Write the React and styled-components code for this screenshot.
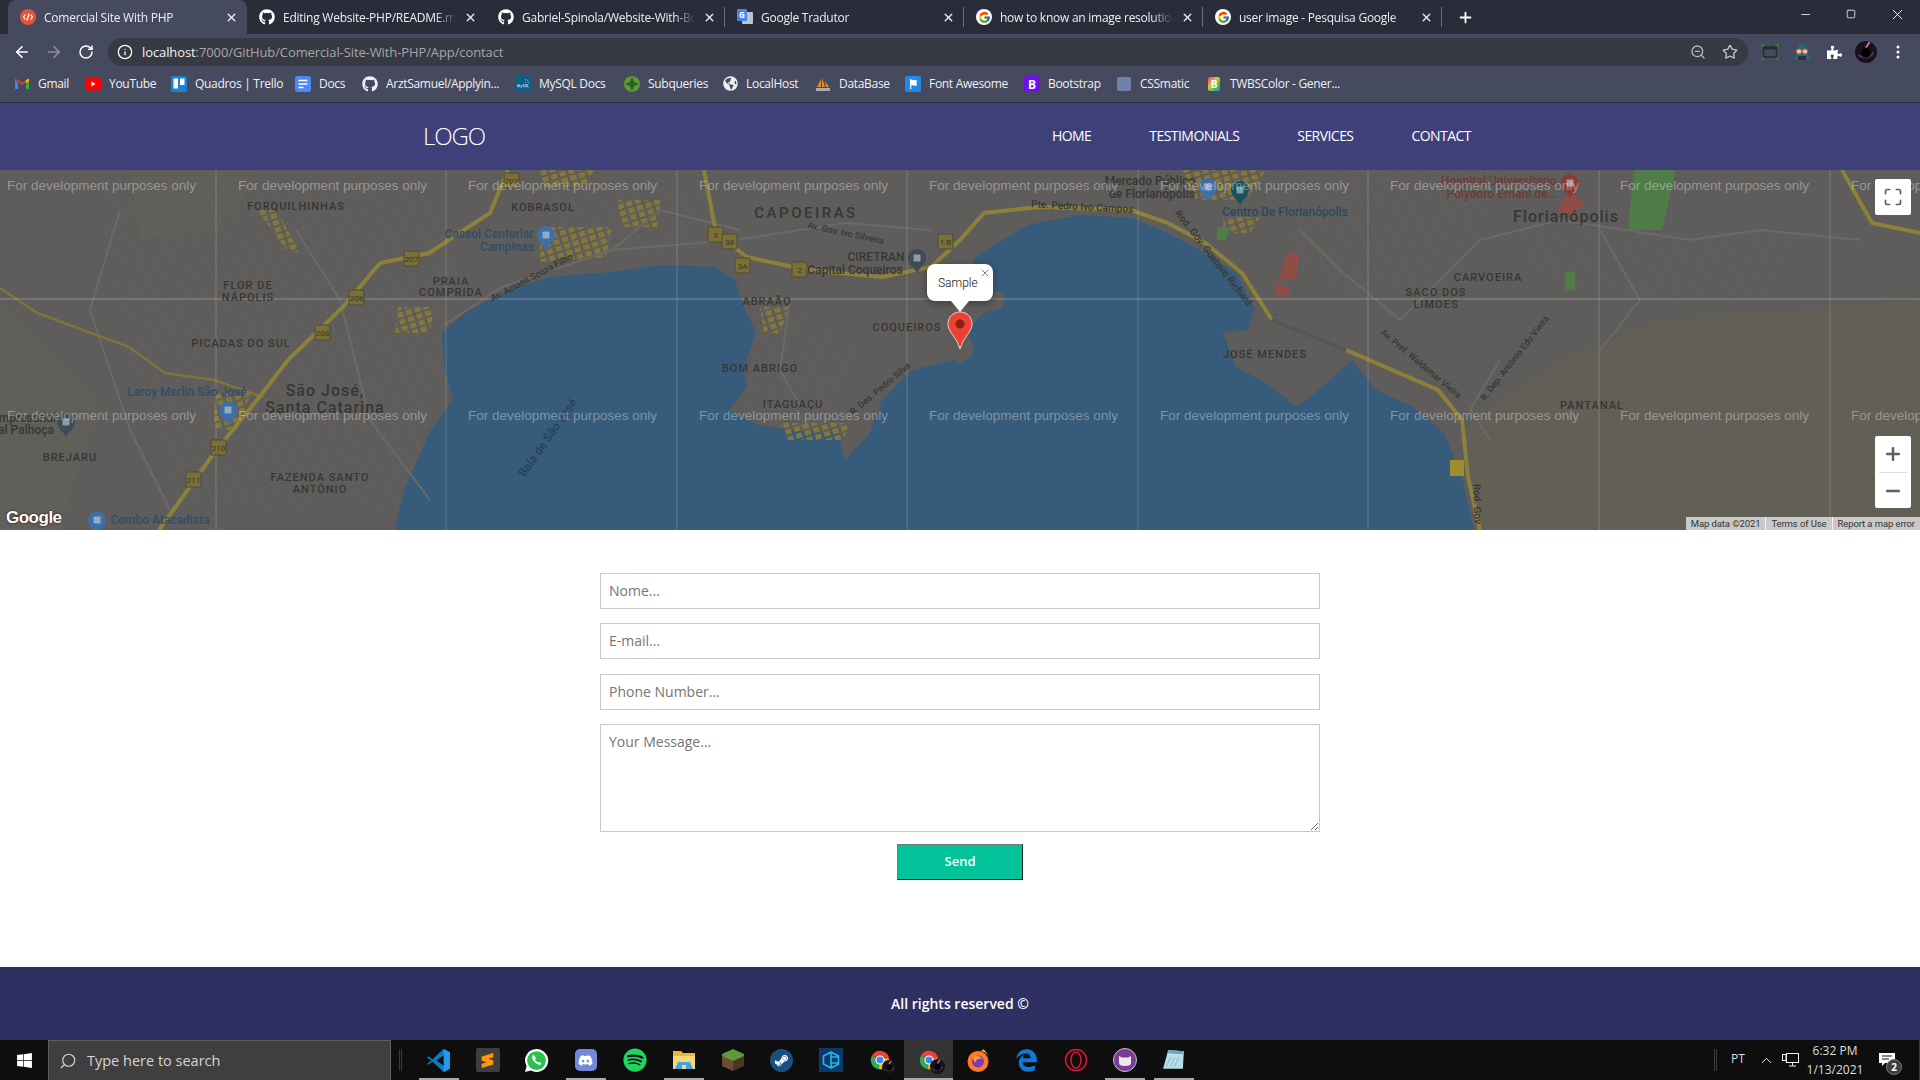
import React from 'react'
import styled, { createGlobalStyle } from 'styled-components'
import { ArrowLeft, ArrowRight, RotateCw, Info, ZoomOut, Star, Search, ChevronUp, X, Plus, Minus, Square, Maximize } from 'lucide-react'
import { FaGithub, FaWindows, FaDiscord, FaSpotify, FaSteamSymbol, FaEdgeLegacy, FaPuzzlePiece, FaGlobeAmericas } from 'react-icons/fa'
import { FcGoogle } from 'react-icons/fc'
import { SiSublimetext, SiMysql } from 'react-icons/si'

const GlobalStyle = createGlobalStyle`
    html, body {
        margin: 0;
        padding: 0;
        background: #fff;
    }
    * {
        box-sizing: border-box;
    }
    body {
        font-family: "Open Sans", "Liberation Sans", sans-serif;
    }
`

const Screen = styled.div`
    width: 1920px;
    height: 1080px;
    display: flex;
    flex-direction: column;
    overflow: hidden;
`

/* browser chrome */
const TabStrip = styled.div`
    height: 34px;
    display: flex;
    padding-left: 8px;
    background: #2a2c39;
    color: #fff;
`

const Tab = styled.div`
    position: relative;
    width: 239px;
    height: 34px;
    display: flex;
    align-items: center;
    padding: 0 9px 0 12px;
    gap: 8px;
    border-radius: 8px 8px 0 0;
    background: ${p => (p.$active ? '#454a5e' : 'transparent')};
    &::after {
        content: '';
        position: absolute;
        right: 0;
        top: 7px;
        height: 20px;
        width: 1px;
        background: ${p => (p.$active || p.$plain ? 'transparent' : '#6b6e7c')};
    }
`

const TabTitle = styled.span`
    flex: 1;
    min-width: 0;
    font-size: 12px;
    letter-spacing: -0.25px;
    white-space: nowrap;
    overflow: hidden;
    color: #eceef3;
    -webkit-mask-image: linear-gradient(to right, #000 88%, transparent);
    mask-image: linear-gradient(to right, #000 88%, transparent);
`

const GoogleBadge = styled.span`
    width: 16px;
    height: 16px;
    display: flex;
    flex: none;
    align-items: center;
    justify-content: center;
    border-radius: 50%;
    background: #fff;
`

const PlusSlot = styled.div`
    width: 46px;
    display: flex;
    align-items: center;
    justify-content: center;
`

const WindowControls = styled.div`
    margin-left: auto;
    display: flex;
`

const WindowButton = styled.div`
    width: 46px;
    height: 28px;
    display: flex;
    align-items: center;
    justify-content: center;
`

const Toolbar = styled.div`
    height: 36px;
    display: flex;
    align-items: center;
    padding-left: 6px;
    background: #454a5e;
`

const ToolButton = styled.div`
    width: 32px;
    height: 28px;
    flex: none;
    display: flex;
    align-items: center;
    justify-content: center;
    color: ${p => p.$color || '#fff'};
`

const Omnibox = styled.div`
    width: 1640px;
    height: 28px;
    margin: 0 6px;
    padding: 0 2px 0 9px;
    display: flex;
    align-items: center;
    border-radius: 14px;
    background: #373943;
    color: #fff;
`

const Url = styled.span`
    flex: 1;
    margin-left: 9px;
    font-size: 13px;
    letter-spacing: -0.1px;
    color: #a5a7ad;
    & b {
        font-weight: 400;
        color: #f1f1f3;
    }
`

const BookmarkBar = styled.div`
    height: 33px;
    display: flex;
    padding: 0 0 5px 14px;
    background: #454a5e;
    border-bottom: 1px solid #2a2c39;
`

const Bookmark = styled.div`
    width: ${p => p.$w}px;
    display: flex;
    align-items: center;
    gap: 8px;
    font-size: 12px;
    letter-spacing: -0.3px;
    white-space: nowrap;
    color: #f0f1f4;
`

const MysqlTile = styled.span`
    width: 16px;
    height: 16px;
    display: flex;
    align-items: center;
    justify-content: center;
    border-radius: 2px;
    background: #0d5f86;
    color: #dfeef5;
`

/* site */
const Navbar = styled.nav`
    height: 67px;
    display: flex;
    align-items: center;
    justify-content: space-between;
    padding: 0 449px 2px 423px;
    background: #3d4079;
    color: #fff;
`

const Logo = styled.div`
    font-size: 24px;
    font-weight: 300;
    letter-spacing: -1.1px;
`

const NavLinks = styled.div`
    display: flex;
    gap: 58px;
`

const NavLink = styled.a`
    font-size: 14px;
    letter-spacing: -0.55px;
    font-weight: 400;
    color: #fff;
`

const MapArea = styled.div`
    position: relative;
    height: 360px;
    overflow: hidden;
    background: #5e5d5b;
`

const MapSvg = styled.svg`
    display: block;
    width: 1920px;
    height: 360px;
`

const MapText = styled.text`
    font-family: Roboto, "Liberation Sans", sans-serif;
    font-size: ${p => p.$size || 11}px;
    font-weight: ${p => p.$weight || 500};
    letter-spacing: ${p => p.$spacing || 0}px;
    fill: ${p => p.$color || '#363733'};
    text-anchor: middle;
`

const Watermark = styled.text`
    font-family: "Liberation Sans", Arial, sans-serif;
    font-size: 13.5px;
    fill: rgba(255, 255, 255, 0.36);
`

const GoogleMark = styled.div`
    position: absolute;
    left: 6px;
    bottom: 2px;
    font-family: "Liberation Sans", sans-serif;
    font-size: 17px;
    font-weight: 700;
    letter-spacing: -0.5px;
    color: #fff;
    text-shadow: 0 0 2px #000;
`

const MapControl = styled.div`
    position: absolute;
    right: 9px;
    top: ${p => p.$top}px;
    width: 36px;
    height: ${p => p.$h}px;
    display: flex;
    flex-direction: column;
    align-items: center;
    justify-content: center;
    background: #fff;
    border-radius: 2px;
    color: #5f5f5f;
`

const ZoomRule = styled.div`
    width: 28px;
    height: 1px;
    margin: 8px 0;
    background: #ddd;
`

const Attribution = styled.div`
    position: absolute;
    right: 0;
    bottom: 0;
    display: flex;
    height: 13px;
    background: #c9c9c9;
    font-family: Roboto, "Liberation Sans", sans-serif;
    font-size: 9.5px;
    line-height: 13px;
    letter-spacing: -0.1px;
    color: #333;
    & span {
        padding: 0 5px;
        border-left: 1px solid #f4f4f4;
    }
    & span:first-child {
        border-left: 0;
    }
`

const InfoWindow = styled.div`
    position: absolute;
    left: 927px;
    top: 94px;
    width: 66px;
    height: 37px;
    padding: 12px 0 0 11px;
    background: #fff;
    border-radius: 8px;
    font-family: Roboto, "Liberation Sans", sans-serif;
    font-size: 12px;
    font-weight: 300;
    line-height: 15px;
    color: #111;
    box-shadow: 0 2px 7px 1px rgba(0, 0, 0, 0.3);
    &::after {
        content: '';
        position: absolute;
        left: 24px;
        top: 37px;
        border-left: 9px solid transparent;
        border-right: 9px solid transparent;
        border-top: 11px solid #fff;
    }
`

const InfoClose = styled.div`
    position: absolute;
    right: 2px;
    top: 3px;
    display: flex;
    color: #555;
`

const MapPin = styled.svg`
    position: absolute;
    left: 947px;
    top: 141px;
`

const ContentArea = styled.main`
    flex: 1;
    padding-top: 43px;
    background: #fff;
`

const ContactForm = styled.form`
    width: 720px;
    margin: 0 auto;
    display: flex;
    flex-direction: column;
    align-items: center;
    gap: 14.4px;
`

const Field = styled.input`
    width: 100%;
    height: 36px;
    padding: 0 8px 1px;
    border: 1px solid #c8c8c8;
    outline: none;
    font-family: "Open Sans", sans-serif;
    font-size: 14px;
`

const MessageField = styled.textarea`
    width: 100%;
    height: 108px;
    padding: 7px 8px;
    border: 1px solid #c8c8c8;
    outline: none;
    font-family: "Open Sans", sans-serif;
    font-size: 14px;
`

const SendButton = styled.button`
    width: 126px;
    height: 36px;
    margin-top: -3px;
    padding: 0 0 1px;
    background: #02c39a;
    border: 1px solid;
    border-color: #767676 #222 #222 #767676;
    color: #fff;
    font-family: "Open Sans", sans-serif;
    font-size: 13px;
    font-weight: 600;
`

const Footer = styled.footer`
    height: 73px;
    display: flex;
    align-items: center;
    justify-content: center;
    background: #2e3061;
    color: #fff;
    font-size: 14px;
    font-weight: 600;
`

/* windows taskbar */
const Taskbar = styled.div`
    height: 40px;
    display: flex;
    align-items: center;
    background: #0e0e0e;
    color: #fff;
`

const StartButton = styled.div`
    width: 48px;
    display: flex;
    justify-content: center;
`

const SearchBox = styled.div`
    width: 343px;
    height: 40px;
    display: flex;
    align-items: center;
    gap: 10px;
    padding-left: 10px;
    background: #3f3f3f;
    border: 1px solid #5e5e5e;
    border-bottom: 0;
    color: #d5d5d5;
    font-size: 14.5px;
`

const Grip = styled.div`
    width: 3px;
    height: 22px;
    flex: none;
    border-left: 1px solid #3c3c3c;
    border-right: 1px solid #3c3c3c;
    margin: ${p => p.$margin || 0};
`

const AppIcon = styled.div`
    position: relative;
    width: 49px;
    height: 40px;
    display: flex;
    align-items: center;
    justify-content: center;
    background: ${p => (p.$active ? '#333' : 'transparent')};
    &::after {
        content: '';
        position: absolute;
        bottom: 0;
        left: ${p => (p.$active ? 0 : '5px')};
        right: ${p => (p.$active ? 0 : '4px')};
        height: 2px;
        background: ${p => (p.$running || p.$active ? '#aaa' : 'transparent')};
    }
`

const IconTile = styled.span`
    width: ${p => p.$size}px;
    height: ${p => p.$size}px;
    display: flex;
    align-items: center;
    justify-content: center;
    border-radius: ${p => p.$radius};
    background: ${p => p.$bg};
    color: ${p => p.$color};
`

const AvatarBadge = styled.div`
    position: absolute;
    right: 8px;
    bottom: 6px;
    display: flex;
`

const Tray = styled.div`
    margin-left: auto;
    display: flex;
    align-items: center;
    height: 40px;
    padding-right: 14px;
    border-right: 1px solid #3a3a3a;
`

const TrayLang = styled.div`
    width: 30px;
    margin: 0 5px 4px 6px;
    text-align: center;
    font-size: 12px;
    color: #ddd;
`

const TrayGlyph = styled.span`
    display: flex;
    margin-left: 7px;
`

const Clock = styled.div`
    width: 68px;
    margin-left: 2px;
    text-align: center;
    font-size: 12px;
    line-height: 19px;
    color: #ddd;
`

const Notify = styled.div`
    position: relative;
    width: 36px;
    height: 40px;
    display: flex;
    align-items: center;
    justify-content: center;
`

const NotifyCount = styled.div`
    position: absolute;
    left: 17px;
    top: 19px;
    width: 16px;
    height: 16px;
    border-radius: 50%;
    background: #3e3e3e;
    border: 1px solid #777;
    text-align: center;
    font-size: 10px;
    font-weight: 700;
    line-height: 14px;
    color: #fff;
`

/* icons that the packages do not have */
const ChromeIcon = ({ size = 16 }) => (
    <svg width={size} height={size} viewBox="0 0 24 24">
        <path d="M12 12 3.3 7A10 10 0 0 1 21.9 10.5L12 12z" fill="#ea4335" />
        <path d="M3.3 7A10 10 0 0 0 11 22l5-8.5L12 12z" fill="#34a853" />
        <path d="M11 22A10 10 0 0 0 21.9 10.5L12 10z" fill="#fbbc05" />
        <circle cx="12" cy="12" r="5" fill="#fff" />
        <circle cx="12" cy="12" r="3.8" fill="#4285f4" />
    </svg>
)

const BlackHole = ({ size = 22 }) => (
    <svg width={size} height={size} viewBox="0 0 24 24">
        <circle cx="12" cy="12" r="12" fill="#17121d" />
        <path d="M4 15C8 20 18 19 20 12" fill="none" stroke="#5a2f50" strokeWidth="2" />
        <path d="M12 7 16 1" stroke="#d9709b" strokeWidth="2" />
        <circle cx="12" cy="13" r="5" fill="#000" />
    </svg>
)

const CodeTabIcon = () => (
    <svg width="16" height="16" viewBox="0 0 16 16">
        <circle cx="8" cy="8" r="8" fill="#e5533d" />
        <path d="M5.5 5.5 3.5 8l2 2.5M10.5 5.5l2 2.5-2 2.5M9 4.5 7 11.5" fill="none" stroke="#fff" strokeWidth="1.2" />
    </svg>
)

const TranslateIcon = () => (
    <svg width="16" height="16" viewBox="0 0 16 16">
        <rect x="5" y="3" width="11" height="12" rx="1" fill="#bfc3cc" />
        <rect width="10" height="12" rx="1" fill="#4285f4" />
        <text x="5" y="9" fontSize="8" fontWeight="700" fill="#fff" textAnchor="middle">G</text>
    </svg>
)

const GmailIcon = () => (
    <svg width="16" height="16" viewBox="0 0 16 16">
        <path d="M1 4v9h3V7z" fill="#4285f4" />
        <path d="M15 4v9h-3V7z" fill="#34a853" />
        <path d="M1 3.5 8 9l7-5.500V2.500L12 4 8 7 4 4 1 2.500z" fill="#ea4335" />
        <path d="M12 4 15 2.500V5l-3 2.200z" fill="#fbbc05" />
    </svg>
)

const YoutubeIcon = () => (
    <svg width="16" height="16" viewBox="0 0 16 16">
        <rect y="1.500" width="16" height="13" rx="3" fill="#f00" />
        <path d="M6.500 5.500v5l4-2.500z" fill="#fff" />
    </svg>
)

const TrelloIcon = () => (
    <svg width="16" height="16" viewBox="0 0 16 16">
        <rect width="16" height="16" rx="2" fill="#1a82d2" />
        <rect x="2.500" y="2.500" width="4.500" height="10" fill="#fff" />
        <rect x="9" y="2.500" width="4.500" height="6.500" fill="#fff" />
    </svg>
)

const DocsIcon = () => (
    <svg width="16" height="16" viewBox="0 0 16 16">
        <rect width="16" height="16" rx="2" fill="#4a8af4" />
        <path d="M3.500 4.500h9M3.500 8h9M3.500 11.500h5" stroke="#fff" strokeWidth="1.700" />
    </svg>
)

const SubqueriesIcon = () => (
    <svg width="16" height="16" viewBox="0 0 16 16">
        <circle cx="8" cy="8" r="8" fill="#5d9a32" />
        <path d="M8 1 11 8 8 15 5 8zM1 8l7-3 7 3-7 3z" fill="#2f5e22" />
    </svg>
)

const SailIcon = () => (
    <svg width="16" height="16" viewBox="0 0 16 16">
        <path d="M2 11 6 3v8zM7 11V1l3 10zM11 11 10 5l4 6z" fill="#e68a2e" />
        <path d="M1 12h14v3H1z" fill="#aab" />
    </svg>
)

const FlagIcon = () => (
    <svg width="16" height="16" viewBox="0 0 16 16">
        <rect width="16" height="16" rx="2" fill="#228ae6" />
        <path d="M5 3v10h1.200V9.500c2-.8 3.500.8 5.500 0V4c-2 .8-3.500-.8-5.500 0V3z" fill="#fff" />
    </svg>
)

const BootstrapIcon = () => (
    <svg width="16" height="16" viewBox="0 0 16 16">
        <rect width="16" height="16" rx="2" fill="#6f10e8" />
        <text x="8" y="12.500" fontSize="12" fontWeight="700" fill="#fff" textAnchor="middle">B</text>
    </svg>
)

const SquareIcon = () => (
    <svg width="16" height="16" viewBox="0 0 16 16">
        <rect x="1" y="1" width="14" height="14" rx="2" fill="#6f80ab" />
    </svg>
)

const TwbsIcon = () => (
    <svg width="16" height="16" viewBox="0 0 16 16">
        <defs>
            <linearGradient id="rainbow" x1="0" y1="0" x2="1" y2="1">
                <stop offset="0" stopColor="#e23b8a" />
                <stop offset=".4" stopColor="#e8c02e" />
                <stop offset=".7" stopColor="#3fbf5b" />
                <stop offset="1" stopColor="#3a7fe0" />
            </linearGradient>
        </defs>
        <rect x="2" y="1" width="12" height="14" rx="2" fill="url(#rainbow)" />
        <text x="8" y="12" fontSize="10" fontWeight="700" fill="#fff" textAnchor="middle">B</text>
    </svg>
)

const ScreenCapIcon = () => (
    <svg width="18" height="16" viewBox="0 0 18 16" fill="none">
        <path d="M1 3V1h3M14 1h3v2M1 13v2h3M17 13v2h-3" stroke="#2f8a2a" strokeWidth="1.300" />
        <rect x="2.500" y="3" width="13" height="10" rx="1" stroke="#262833" strokeWidth="1.300" />
        <rect x="3" y="3.500" width="12" height="2" fill="#262833" />
    </svg>
)

const SpyIcon = () => (
    <svg width="18" height="16" viewBox="0 0 18 16">
        <path d="M9 0c3 0 4 3 4 6l5 10H0L5 6c0-3 1-6 4-6z" fill="#1d6b7c" />
        <path d="M5 12h8v4H5z" fill="#2b3440" />
        <circle cx="6" cy="7.500" r="2.500" fill="#f2c0aa" stroke="#e8552f" />
        <circle cx="12" cy="7.500" r="2.500" fill="#f2c0aa" stroke="#e8552f" />
    </svg>
)

const DotsIcon = () => (
    <svg width="4" height="14" viewBox="0 0 4 14" fill="#fff">
        <circle cx="2" cy="2" r="1.500" />
        <circle cx="2" cy="7" r="1.500" />
        <circle cx="2" cy="12" r="1.500" />
    </svg>
)

const VsCodeIcon = () => (
    <svg width="25" height="25" viewBox="0 0 24 24">
        <path d="M17 1 23 4v16l-6 3L6 13l-3.500 3L1 15l4-3-4-3 1.500-1L6 11z" fill="#0a7cc4" />
        <path d="M17 1 23 4v16l-6 3zM17 7l-7 5 7 5z" fill="#1f9cf0" />
        <path d="M17 7v10l-7-5z" fill="#0e0e0e" />
    </svg>
)

const WhatsappIcon = () => (
    <svg width="25" height="25" viewBox="0 0 24 24">
        <path d="M12 1a11 11 0 0 0-9.500 16.500L1 23l5.700-1.500A11 11 0 1 0 12 1z" fill="#fff" />
        <circle cx="12" cy="12" r="9" fill="#29c24e" />
        <path d="M8.500 7c-.8.6-1 2-.3 3.600 1 2.300 3 4.200 5.300 5.200 1.500.6 2.800.3 3.500-.7l-2.300-2-1.300.8c-1.200-.6-2.200-1.600-2.800-2.800l.8-1.200L9.800 7z" fill="#fff" />
    </svg>
)

const FolderIcon = () => (
    <svg width="24" height="24" viewBox="0 0 24 24">
        <path d="M1 3h8l2 2h12v16H1z" fill="#e8b83a" />
        <path d="M1 8h22v13H1z" fill="#f8d775" />
        <path d="M6 14h12l3 7H3z" fill="#3da5e8" />
        <path d="M10 17h4v4h-4z" fill="#f8d775" />
    </svg>
)

const CubeIcon = () => (
    <svg width="24" height="24" viewBox="0 0 24 24">
        <path d="M12 1 23 6v5L12 16 1 11V6z" fill="#5f9a3b" />
        <path d="M1 8 12 13v10L1 18z" fill="#6d4c33" />
        <path d="M23 8 12 13v10l11-5z" fill="#4d3624" />
    </svg>
)

const HexIcon = () => (
    <svg width="24" height="24" viewBox="0 0 24 24">
        <rect width="24" height="24" fill="#0b3a66" />
        <path d="M12 4 19.500 8v8L12 20l-7.500-4V8zM12 4v16M12 9h7M12 15h7" fill="none" stroke="#25b5e8" strokeWidth="1.600" />
    </svg>
)

const FirefoxIcon = () => (
    <svg width="24" height="24" viewBox="0 0 24 24">
        <circle cx="12" cy="13.500" r="10.500" fill="#ff7a1f" />
        <path d="M12 3c6 0 11 2 11 10 0-5-2-9-6-12 0 2-2 2-5 2z" fill="#ffbd2e" />
        <circle cx="12" cy="13.500" r="6" fill="#7a3ac4" />
        <path d="M7 9c3-2 8-1 9 2-3-1-6 0-7 4-1-2-2-4-2-6z" fill="#ff9a3c" />
    </svg>
)

const OperaIcon = () => (
    <svg width="24" height="24" viewBox="0 0 24 24" fill="none" stroke="#e0163b">
        <circle cx="12" cy="12" r="10.500" strokeWidth="1.500" />
        <ellipse cx="12" cy="12" rx="5" ry="8" strokeWidth="1.500" />
    </svg>
)

const KrakenIcon = () => (
    <svg width="24" height="24" viewBox="0 0 24 24">
        <circle cx="12" cy="12" r="11.500" fill="#7a3d96" stroke="#cbb9d2" />
        <path d="M6 8l3 1.500h6L18 8v7c0 2-2 3-6 3s-6-1-6-3z" fill="#eceaf0" />
    </svg>
)

const NotepadIcon = () => (
    <svg width="25" height="25" viewBox="0 0 24 24">
        <path d="M7 2 22 3l-1 17H2z" fill="#b8dfe8" />
        <path d="M7 2 22 3l-1 3L6 5z" fill="#6aa8bd" />
        <path d="M9 9 5 18M13 9l-4 9M17 9l-4 9" stroke="#7fb0be" strokeWidth="0.800" />
    </svg>
)

const PcIcon = () => (
    <svg width="17" height="16" viewBox="0 0 17 16" fill="none" stroke="#eee">
        <rect x="4.500" y="1.500" width="12" height="9" />
        <path d="M10.500 10.500v3M7 14h7" />
        <rect x="0.500" y="2.500" width="3.500" height="6" fill="#0e0e0e" />
    </svg>
)

const MessageIcon = () => (
    <svg width="16" height="16" viewBox="0 0 16 16">
        <path d="M0 1h16v10H6l-3 3v-3H0z" fill="#fff" />
        <path d="M3 4h10M3 7h7" stroke="#0e0e0e" />
    </svg>
)

const googleFavicon = <GoogleBadge><FcGoogle size={13} /></GoogleBadge>

const tabs = [
    { title: 'Comercial Site With PHP', icon: <CodeTabIcon />, active: true },
    { title: 'Editing Website-PHP/README.md at main', icon: <FaGithub size={16} />, plain: true },
    { title: 'Gabriel-Spinola/Website-With-Bootstrap', icon: <FaGithub size={16} /> },
    { title: 'Google Tradutor', icon: <TranslateIcon /> },
    { title: 'how to know an image resolution', icon: googleFavicon },
    { title: 'user image - Pesquisa Google', icon: googleFavicon },
]

const bookmarks = [
    { w: 71, label: 'Gmail', icon: <GmailIcon /> },
    { w: 86, label: 'YouTube', icon: <YoutubeIcon /> },
    { w: 124, label: 'Quadros | Trello', icon: <TrelloIcon /> },
    { w: 67, label: 'Docs', icon: <DocsIcon /> },
    { w: 153, label: 'ArztSamuel/Applyin...', icon: <FaGithub size={16} /> },
    { w: 109, label: 'MySQL Docs', icon: <MysqlTile><SiMysql size={13} /></MysqlTile> },
    { w: 99, label: 'Subqueries', icon: <SubqueriesIcon /> },
    { w: 92, label: 'LocalHost', icon: <FaGlobeAmericas size={15} /> },
    { w: 90, label: 'DataBase', icon: <SailIcon /> },
    { w: 119, label: 'Font Awesome', icon: <FlagIcon /> },
    { w: 92, label: 'Bootstrap', icon: <BootstrapIcon /> },
    { w: 90, label: 'CSSmatic', icon: <SquareIcon /> },
    { w: 150, label: 'TWBSColor - Gener...', icon: <TwbsIcon /> },
]

const navItems = ['HOME', 'TESTIMONIALS', 'SERVICES', 'CONTACT']

const waterShape = 'M395 360 404 320 422 280 429 263 453 230 444 197 442 163 465 143 508 120 551 107 612 102 661 95 716 97 735 110 744 137 756 163 744 197 747 217 729 240 759 255 790 260 839 263 845 290 870 263 882 230 912 200 955 190 960 193 972 187 973 175 966 160 984 143 1003 138 1004 122 988 120 969 103 975 87 1003 70 1027 55 1082 45 1131 48 1168 63 1205 83 1236 103 1254 137 1248 160 1223 163 1236 197 1266 213 1297 237 1327 213 1352 190 1376 220 1413 237 1444 263 1462 307 1474 360z'

const motorways = [
    'M508 0 490 43 429 83 380 93 343 137 288 190 257 230 214 283 159 360',
    'M704 0 716 63 747 87 808 100 882 107 931 97 960 70 984 43 1040 37 1131 40 1168 53 1205 73 1242 103 1272 150',
    'M1346 180 1438 220 1462 250 1468 307 1480 360',
    'M1842 0 1872 53 1920 63',
]

const secondaryRoads = [
    'M0 118 37 143 129 177 165 203 214 210 263 227',
]

const greyRoads = [
    'M441 157 502 117 612 80 735 70 845 53 931 60',
    'M612 80 660 40 740 60',
    'M1400 150 1480 70 1560 50 1690 70 1760 60 1860 70',
    'M1500 190 1470 240 1490 270',
    'M1600 60 1640 130 1600 180',
    'M296 60 340 130 370 250 430 330',
    'M120 40 90 140 130 260 170 340',
    'M790 130 780 200 800 235',
    'M1300 60 1340 100 1400 150',
]

// built-up patches in the yellow hatch
const hatchedBlocks = 'M540 0h54l-10 17h-40zM540 57h72l-6 30-66 5zM618 30h43l-4 27h-36zM257 40l20 0 23 43-14-4zM398 137h37l-6 26h-34zM760 137h30l-10 26h-16zM214 223h37l-14 37h-23zM778 253h73l-8 17h-55zM1180 0h86l-20 30h-50zM1223 47h37l-10 16h-27z'

const labels = [
    { x: 296, y: 40, t: 'FORQUILHINHAS', s: 1 },
    { x: 543, y: 41, t: 'KOBRASOL', s: 1 },
    { x: 806, y: 48, t: 'CAPOEIRAS', size: 15, s: 2.5 },
    { x: 845, y: 66, t: 'Av. Gov. Ivo Silveira', size: 9, r: 12 },
    { x: 489, y: 68, t: 'Cassol Centerlar', c: '#2f4d6b', size: 12 },
    { x: 507, y: 81, t: 'Campinas', c: '#2f4d6b', size: 12 },
    { x: 876, y: 91, t: 'CIRETRAN', size: 12 },
    { x: 855, y: 104, t: 'Capital Coqueiros', size: 12 },
    { x: 248, y: 119, t: 'FLOR DE', s: 1 },
    { x: 248, y: 131, t: 'NÁPOLIS', s: 1 },
    { x: 451, y: 115, t: 'PRAIA', s: 1 },
    { x: 451, y: 126, t: 'COMPRIDA', s: 1 },
    { x: 767, y: 135, t: 'ABRAÃO', s: 1 },
    { x: 907, y: 161, t: 'COQUEIROS', s: 1 },
    { x: 241, y: 177, t: 'PICADAS DO SUL', s: 1 },
    { x: 760, y: 202, t: 'BOM ABRIGO', s: 1 },
    { x: 793, y: 238, t: 'ITAGUAÇU', s: 1 },
    { x: 325, y: 226, t: 'São José,', size: 16, s: 1 },
    { x: 325, y: 243, t: 'Santa Catarina', size: 16, s: 1 },
    { x: 187, y: 226, t: 'Leroy Merlin São José', c: '#2f4d6b', size: 12 },
    { x: 24, y: 252, t: 'Empresarial', size: 12 },
    { x: 26, y: 264, t: 'al Palhoça', size: 12 },
    { x: 70, y: 291, t: 'BREJARU', s: 1 },
    { x: 320, y: 311, t: 'FAZENDA SANTO', s: 1 },
    { x: 320, y: 323, t: 'ANTÔNIO', s: 1 },
    { x: 160, y: 354, t: 'Combo Atacadista', c: '#2f4d6b', size: 12 },
    { x: 551, y: 270, t: 'Baía de São José', c: '#26415c', size: 12, r: -55 },
    { x: 882, y: 221, t: 'R. Des. Pedro Silva', size: 9, r: -40 },
    { x: 533, y: 110, t: 'Av. Aciomi Souza Filho', size: 9, r: -28 },
    { x: 1082, y: 40, t: 'Pte. Pedro Ivo Campos', size: 10, r: 3 },
    { x: 1211, y: 90, t: 'Rod. Gov. Gustavo Richard', size: 10, r: 52 },
    { x: 1150, y: 15, t: 'Mercado Público', size: 12 },
    { x: 1152, y: 28, t: 'de Florianópolis', size: 12 },
    { x: 1285, y: 46, t: 'Centro De Florianópolis', c: '#2a4a5e', size: 12 },
    { x: 1499, y: 15, t: 'Hospital Universitário', c: '#6e3b36', size: 12 },
    { x: 1502, y: 28, t: 'Polydoro Ernani de...', c: '#6e3b36', size: 12 },
    { x: 1566, y: 52, t: 'Florianópolis', size: 16, s: 1 },
    { x: 1488, y: 111, t: 'CARVOEIRA', s: 1 },
    { x: 1436, y: 126, t: 'SACO DOS', s: 1 },
    { x: 1436, y: 138, t: 'LIMOES', s: 1 },
    { x: 1265, y: 188, t: 'JOSÉ MENDES', s: 1 },
    { x: 1592, y: 239, t: 'PANTANAL', s: 1 },
    { x: 1419, y: 196, t: 'Av. Pref. Waldemar Vieira', size: 9, r: 40 },
    { x: 1517, y: 190, t: 'R. Dep. Antônio Edu Vieira', size: 9, r: -52 },
    { x: 1474, y: 334, t: 'Rod. Gov', size: 10, r: 88 },
]

const shields = [
    { x: 504, y: 3, n: '207' }, { x: 404, y: 81, n: '207' }, { x: 349, y: 120, n: '208' },
    { x: 315, y: 155, n: '208' }, { x: 211, y: 270, n: '210' }, { x: 186, y: 302, n: '211' },
    { x: 708, y: 57, n: '3' }, { x: 722, y: 64, n: '38' }, { x: 735, y: 88, n: '3A' },
    { x: 792, y: 92, n: '2' }, { x: 938, y: 64, n: '1 B' },
]

const pois = [
    { x: 546, y: 65, c: '#3f6fa8' }, { x: 917, y: 88, c: '#3d4c58' }, { x: 228, y: 240, c: '#3f6fa8' },
    { x: 66, y: 252, c: '#3d4c58' }, { x: 1208, y: 17, c: '#3f6fa8' }, { x: 1240, y: 20, c: '#16515c' },
    { x: 1570, y: 13, c: '#8a3b36' }, { x: 97, y: 350, c: '#3f6fa8' },
]

const watermarkColumns = [7, 238, 468, 699, 929, 1160, 1390, 1620, 1851]

const MapDrawing = () => (
    <MapSvg viewBox="0 0 1920 360">
        <defs>
            <pattern id="streets" width="15" height="11" patternUnits="userSpaceOnUse" patternTransform="rotate(-24)">
                <path d="M0 0H15M0 0V11" stroke="#686764" strokeWidth="0.700" fill="none" />
            </pattern>
            <pattern id="blocks" width="9" height="7" patternUnits="userSpaceOnUse" patternTransform="rotate(-18)">
                <rect width="6" height="5" fill="#857738" />
            </pattern>
        </defs>
        <rect width="1920" height="360" fill="#5e5d5b" />
        <path d="M1480 360 1460 260 1560 190 1660 150 1920 130V360z" fill="#625f56" />
        <path d="M0 130 100 230 60 360H0zM130 0 260 0 220 60 140 70z" fill="#605f59" />
        <path d="M100 20 430 20 470 130 400 340 180 340 130 200zM540 20 700 20 730 80 560 90zM760 110 860 180 840 250 740 240zM1260 0 1500 0 1460 120 1330 130 1280 70zM1500 60 1800 60 1760 140 1560 130z" fill="url(#streets)" />
        <path d={waterShape} fill="#365b7b" />
        <path d={hatchedBlocks} fill="url(#blocks)" />
        {greyRoads.map((d, i) => (
            <path key={i} d={d} fill="none" stroke="#6b6a67" strokeWidth="2" />
        ))}
        {secondaryRoads.map((d, i) => (
            <path key={i} d={d} fill="none" stroke="#7f7439" strokeWidth="2.500" />
        ))}
        {motorways.map((d, i) => (
            <path key={i} d={d} fill="none" stroke="#8d803a" strokeWidth="4" />
        ))}
        <path d="M1272 150 1346 180" stroke="#565654" strokeWidth="4" />
        <path d="M1450 290h14v16h-14z" fill="#a08c33" />
        <path d="M1634 0h42l-14 60h-34zM1565 102h10v18h-10zM1217 57h13l-4 13h-9z" fill="#4f7c47" />
        <path d="M1288 83h12l-4 27h-18zM1275 113l15 5v7h-15zM1570 20l15 14-14 12-14-6z" fill="#8f4d45" />
        {[216, 446, 677, 907, 1138, 1368, 1599, 1830].map(x => (
            <path key={x} d={`M${x} 0V360`} stroke="rgba(255,255,255,0.2)" />
        ))}
        <path d="M0 129H1920" stroke="rgba(255,255,255,0.3)" />
        {shields.map(s => (
            <g key={`${s.x}-${s.y}`}>
                <rect x={s.x} y={s.y} width="15" height="15" rx="1" fill="#7b6f33" stroke="#4a4a3c" />
                <MapText x={s.x + 7.500} y={s.y + 11} $size={8} $weight={400}>{s.n}</MapText>
            </g>
        ))}
        {pois.map(p => (
            <g key={`${p.x}-${p.y}`}>
                <path d={`M${p.x - 9} ${p.y}a9 9 0 0 1 18 0c0 6-6 9-9 15-3-6-9-9-9-15z`} fill={p.c} />
                <rect x={p.x - 3.500} y={p.y - 3.500} width="7" height="7" rx="1" fill="#d7dde2" opacity="0.55" />
            </g>
        ))}
        {labels.map(l => (
            <MapText
                key={l.t}
                x={l.x}
                y={l.y}
                $size={l.size}
                $spacing={l.s}
                $color={l.c}
                transform={l.r ? `rotate(${l.r} ${l.x} ${l.y})` : undefined}
            >
                {l.t}
            </MapText>
        ))}
        {[20, 250].map(y => watermarkColumns.map(x => (
            <Watermark key={`${x}-${y}`} x={x} y={y}>For development purposes only</Watermark>
        )))}
    </MapSvg>
)

const App = () => (
    <Screen>
        <GlobalStyle />
        <TabStrip>
            {tabs.map(tab => (
                <Tab key={tab.title} $active={tab.active} $plain={tab.plain}>
                    {tab.icon}
                    <TabTitle>{tab.title}</TabTitle>
                    <X size={13} strokeWidth={2.5} color="#e8e9ee" />
                </Tab>
            ))}
            <PlusSlot>
                <Plus size={17} strokeWidth={2.5} />
            </PlusSlot>
            <WindowControls>
                <WindowButton><Minus size={13} strokeWidth={1.5} /></WindowButton>
                <WindowButton><Square size={10} strokeWidth={1.8} /></WindowButton>
                <WindowButton><X size={17} strokeWidth={1.3} /></WindowButton>
            </WindowControls>
        </TabStrip>

        <Toolbar>
            <ToolButton><ArrowLeft size={18} strokeWidth={2.2} /></ToolButton>
            <ToolButton $color="#8d909d"><ArrowRight size={18} strokeWidth={2.2} /></ToolButton>
            <ToolButton><RotateCw size={16} strokeWidth={2.2} /></ToolButton>
            <Omnibox>
                <Info size={16} strokeWidth={2} />
                <Url><b>localhost</b>:7000/GitHub/Comercial-Site-With-PHP/App/contact</Url>
                <ToolButton $color="#b9bac0"><ZoomOut size={16} strokeWidth={2} /></ToolButton>
                <ToolButton $color="#c4c5ca"><Star size={16} strokeWidth={2} /></ToolButton>
            </Omnibox>
            <ToolButton><ScreenCapIcon /></ToolButton>
            <ToolButton><SpyIcon /></ToolButton>
            <ToolButton><FaPuzzlePiece size={15} /></ToolButton>
            <ToolButton><BlackHole /></ToolButton>
            <ToolButton><DotsIcon /></ToolButton>
        </Toolbar>

        <BookmarkBar>
            {bookmarks.map(b => (
                <Bookmark key={b.label} $w={b.w}>
                    {b.icon}
                    {b.label}
                </Bookmark>
            ))}
        </BookmarkBar>

        <Navbar>
            <Logo>LOGO</Logo>
            <NavLinks>
                {navItems.map(item => <NavLink key={item}>{item}</NavLink>)}
            </NavLinks>
        </Navbar>

        <MapArea>
            <MapDrawing />
            <InfoWindow>
                Sample
                <InfoClose><X size={12} strokeWidth={1.5} /></InfoClose>
            </InfoWindow>
            <MapPin width="26" height="39" viewBox="0 0 26 39">
                <path d="M13 1C6 1 1 6 1 13c0 8 8 12 12 25 4-13 12-17 12-25C25 6 20 1 13 1z" fill="#ea4335" stroke="#f6c9c2" />
                <circle cx="13" cy="13" r="4.500" fill="#8e1b14" />
            </MapPin>
            <MapControl $top={9} $h={36}><Maximize size={20} strokeWidth={2} /></MapControl>
            <MapControl $top={266} $h={72}>
                <Plus size={20} strokeWidth={3} />
                <ZoomRule />
                <Minus size={20} strokeWidth={3} />
            </MapControl>
            <GoogleMark>Google</GoogleMark>
            <Attribution>
                <span>Map data ©2021</span>
                <span>Terms of Use</span>
                <span>Report a map error</span>
            </Attribution>
        </MapArea>

        <ContentArea>
            <ContactForm>
                <Field placeholder="Nome..." />
                <Field placeholder="E-mail..." />
                <Field placeholder="Phone Number..." />
                <MessageField placeholder="Your Message..." />
                <SendButton type="button">Send</SendButton>
            </ContactForm>
        </ContentArea>

        <Footer>All rights reserved ©</Footer>

        <Taskbar>
            <StartButton><FaWindows size={17} /></StartButton>
            <SearchBox>
                <Search size={18} strokeWidth={1.5} style={{ transform: 'scaleX(-1)' }} />
                Type here to search
            </SearchBox>
            <Grip $margin="0 12px 0 8px" />
            <AppIcon $running><VsCodeIcon /></AppIcon>
            <AppIcon>
                <IconTile $size={24} $radius="2px" $bg="#3e3e3e" $color="#ff9800"><SiSublimetext size={15} /></IconTile>
            </AppIcon>
            <AppIcon><WhatsappIcon /></AppIcon>
            <AppIcon $running>
                <IconTile $size={22} $radius="5px" $bg="#7289da" $color="#fff"><FaDiscord size={15} /></IconTile>
            </AppIcon>
            <AppIcon><FaSpotify size={24} color="#1ed760" /></AppIcon>
            <AppIcon $running><FolderIcon /></AppIcon>
            <AppIcon><CubeIcon /></AppIcon>
            <AppIcon>
                <IconTile $size={23} $radius="50%" $bg="#1b4f7f" $color="#fff"><FaSteamSymbol size={15} /></IconTile>
            </AppIcon>
            <AppIcon><HexIcon /></AppIcon>
            <AppIcon>
                <ChromeIcon size={22} />
                <AvatarBadge><BlackHole size={14} /></AvatarBadge>
            </AppIcon>
            <AppIcon $active>
                <ChromeIcon size={22} />
                <AvatarBadge><BlackHole size={15} /></AvatarBadge>
            </AppIcon>
            <AppIcon><FirefoxIcon /></AppIcon>
            <AppIcon><FaEdgeLegacy size={23} color="#0f7ad6" /></AppIcon>
            <AppIcon><OperaIcon /></AppIcon>
            <AppIcon $running><KrakenIcon /></AppIcon>
            <AppIcon $running><NotepadIcon /></AppIcon>
            <Tray>
                <Grip />
                <TrayLang>PT</TrayLang>
                <ChevronUp size={17} strokeWidth={1.3} />
                <TrayGlyph><PcIcon /></TrayGlyph>
                <Clock>
                    6:32 PM
                    <br />
                    1/13/2021
                </Clock>
                <Notify>
                    <MessageIcon />
                    <NotifyCount>2</NotifyCount>
                </Notify>
            </Tray>
        </Taskbar>
    </Screen>
)

export default App
